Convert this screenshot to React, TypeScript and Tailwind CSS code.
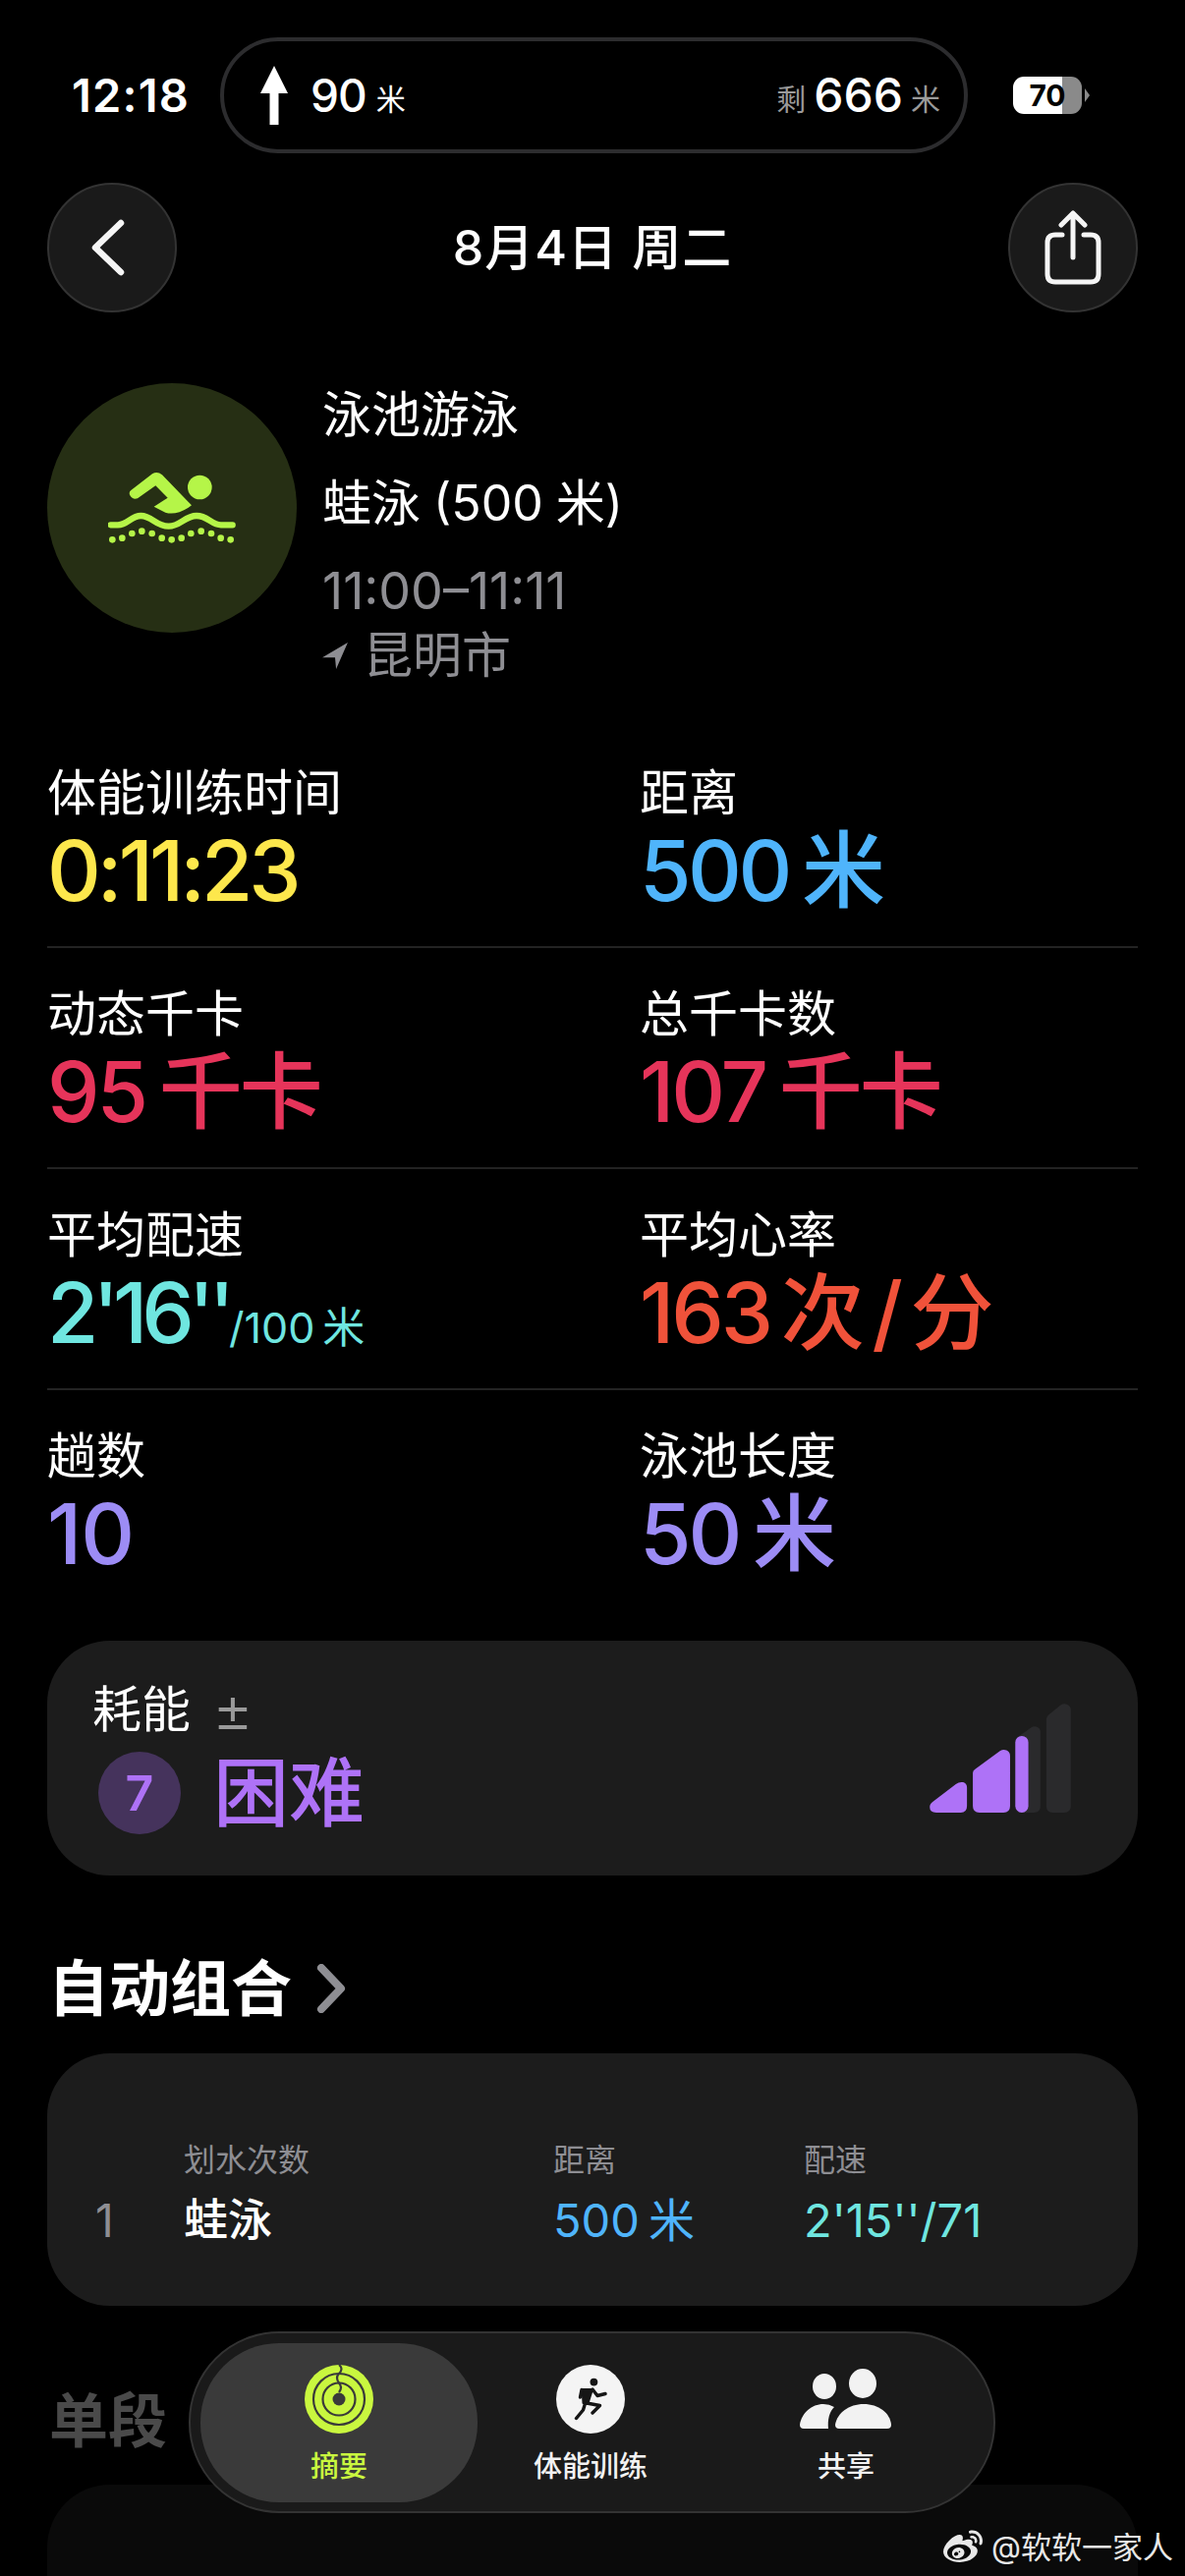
import React from "react";
import { FaWeibo } from "react-icons/fa6";

const metrics = [
  [
    { label: "体能训练时间", value: "0:11:23", color: "text-[#fde74c]", fit: "tracking-[-4px]" },
    { label: "距离", value: "500 米", color: "text-[#4fb4fb]", fit: "tracking-[-3.5px] [word-spacing:-6px]" },
  ],
  [
    { label: "动态千卡", value: "95 千卡", color: "text-[#e6345a]", fit: "tracking-[-3px] [word-spacing:-6px]" },
    { label: "总千卡数", value: "107 千卡", color: "text-[#e6345a]", fit: "tracking-[-3px] [word-spacing:-6px]" },
  ],
  [
    { label: "平均配速", value: "2'16''", unit: "/100 米", color: "text-[#6fe6e0]", fit: "tracking-[-6px]" },
    { label: "平均心率", value: "163 次 / 分", color: "text-[#f0523a]", fit: "tracking-[-3px] [word-spacing:-9px]" },
  ],
  [
    { label: "趟数", value: "10", color: "text-[#9c8cf5]", fit: "tracking-[-1px]" },
    { label: "泳池长度", value: "50 米", color: "text-[#9c8cf5]", fit: "tracking-[-3px] [word-spacing:-6px]" },
  ],
];

const tabs = [
  { label: "摘要", width: "w-[282px]", active: true },
  { label: "体能训练", width: "w-[230px]", active: false },
  { label: "共享", width: "w-[290px]", active: false },
];

const Swimmer = () => (
  <svg width="130" height="75" viewBox="30 55 390 225" fill="#b5f548">
    <path d="M100 112 L165 62 Q180 52 195 65 L285 158 L275 165 Q235 190 205 180 L170 162 L212 135 L175 98 L120 137 Q105 142 97 128 Q92 118 100 112 Z" />
    <circle cx="310" cy="103" r="37" />
    <path d="M38 218 H60 C90 218 100 190 130 190 C165 190 175 222 215 222 C250 222 265 190 300 190 C335 190 345 218 375 218 H410" fill="none" stroke="#b5f548" strokeWidth="19" strokeLinecap="round" />
    {[[43, 263], [73, 258], [103, 244], [133, 237], [164, 244], [194, 258], [224, 263], [254, 258], [283, 244], [314, 237], [345, 244], [374, 258], [404, 263]].map(([x, y]) => (
      <circle key={x} cx={x} cy={y} r="10" />
    ))}
  </svg>
);

const EffortBars = () => (
  <svg width="144" height="111" viewBox="75 38 432 334">
    <path d="M345 140 L385 112 Q395 105 405 110 Q414 115 414 125 V352 Q414 372 394 372 H345 Z" fill="#2a2a2c" />
    <path d="M432 85 Q432 78 440 72 L475 43 Q485 36 495 40 Q507 45 507 57 V352 Q507 372 487 372 H452 Q432 372 432 352 Z" fill="#2a2a2c" />
    <path d="M75 355 Q75 345 85 338 L155 285 Q165 277 177 279 Q189 283 189 295 V352 Q189 372 170 372 H95 Q75 372 75 355 Z" fill="#ae72f7" />
    <path d="M207 250 Q207 243 215 238 L290 183 Q300 177 310 181 Q321 186 321 198 V352 Q321 372 301 372 H227 Q207 372 207 352 Z" fill="#ae72f7" />
    <rect x="337" y="137" width="40" height="235" rx="20" fill="#ae72f7" />
  </svg>
);

const Rings = () => (
  <svg width="70" height="70" viewBox="0 0 70 70" fill="none">
    <circle cx="35" cy="35" r="35" fill="#c9f73f" />
    <circle cx="35" cy="35" r="26" stroke="#3a3a3a" strokeWidth="2.2" />
    <circle cx="35" cy="35" r="16.5" stroke="#3a3a3a" strokeWidth="2.2" />
    <circle cx="35" cy="35" r="6.5" fill="#3a3a3a" />
    <path d="M35 0 Q40 4 35 9 Q31 13 35 18.5 Q39 23 35 28" stroke="#3a3a3a" strokeWidth="2.2" />
  </svg>
);

const Runner = () => (
  <div className="flex size-[70px] items-center justify-center rounded-full bg-[#f4f4f4]">
    <svg width="34" height="44" viewBox="0 0 34 44" fill="none" stroke="#161616" strokeWidth="3.4" strokeLinecap="round" strokeLinejoin="round">
      <circle cx="20.4" cy="4.6" r="3.9" fill="#161616" stroke="none" />
      <path d="M8.6 12 H19 L14.5 26 H9.5 Z" fill="#161616" strokeWidth="2" />
      <path d="M8 12.5 L6.5 20 M19 12 L24 18.5 L32 16.5 M13 26 L26.5 28.5 L19 36 M11 28 L9.5 33 L2.5 41.5" />
    </svg>
  </div>
);

const People = () => (
  <svg width="94" height="62" viewBox="0 0 94 62" fill="#f2f2f2">
    <ellipse cx="25" cy="18" rx="12" ry="13" />
    <ellipse cx="64" cy="15" rx="14" ry="15" />
    <path d="M4 61 Q0 61 0 57 C2 45 12 36 24 36 Q30 36 35 39 C30 44 28 52 29 61 Z" />
    <path d="M40 61 Q36 61 36 57 C38 45 50 36 65 36 C80 36 92 45 93 57 Q93 61 89 61 Z" />
  </svg>
);

export default function App() {
  return (
    <div className="relative h-[2622px] w-[1206px] overflow-hidden bg-black font-['Inter','Noto_Sans_CJK_SC',sans-serif] text-white">
      {/* status bar */}
      <div className="flex h-[186px] items-start pt-[38px]">
        <div className="flex h-[118px] w-[224px] items-center pl-[73px] text-[47px] font-semibold tracking-[1.2px]">12:18</div>
        <div className="flex h-[118px] w-[761px] items-center justify-between rounded-[59px] border-[4px] border-[#2c2c2e] pl-[36px] pr-[24px]">
          <div className="flex items-center">
            <svg width="30" height="60" viewBox="0 0 30 60" fill="#fff">
              <path d="M15 0 L29 28 H19.5 V60 H10.5 V28 H1 Z" />
            </svg>
            <span className="ml-[22px] text-[46px] font-medium tracking-[-1px]">90</span>
            <span className="ml-[10px] mt-[8px] text-[30px]">米</span>
          </div>
          <div className="flex items-center gap-[8px]">
            <span className="mt-[8px] text-[30px] text-[#9a9a9a]">剩</span>
            <span className="text-[48px] font-medium">666</span>
            <span className="mt-[8px] text-[30px] text-[#9a9a9a]">米</span>
          </div>
        </div>
        <div className="flex h-[118px] items-center pl-[46px]">
          <div className="flex h-[38px] w-[70px] items-center justify-center rounded-[11px] bg-[linear-gradient(90deg,#fff_71%,#8a8a8a_71%)] text-[30px] font-bold leading-none text-black">70</div>
          <svg className="ml-[3px]" width="5" height="14" viewBox="0 0 5 14" fill="#8a8a8a">
            <path d="M0 0 L5 7 L0 14 Z" />
          </svg>
        </div>
      </div>

      {/* nav */}
      <div className="flex h-[132px] items-center justify-between px-[48px]">
        <div className="flex size-[132px] items-center justify-center rounded-full border-2 border-[#333] bg-[#1a1a1a]">
          <svg className="mr-[9px]" width="36" height="58" viewBox="0 0 36 58" fill="none" stroke="#f5f5f5" strokeWidth="6.5" strokeLinecap="round" strokeLinejoin="round">
            <path d="M31 4 L5 29 L31 54" />
          </svg>
        </div>
        <div className="text-[50px] font-medium tracking-[1px]">8月4日 周二</div>
        <div className="flex size-[132px] items-center justify-center rounded-full border-2 border-[#333] bg-[#1a1a1a]">
          <svg width="58" height="76" viewBox="0 0 58 76" fill="none" stroke="#f5f5f5" strokeWidth="5" strokeLinecap="round" strokeLinejoin="round">
            <path d="M18 25 H11 Q3 25 3 33 V65 Q3 73 11 73 H47 Q55 73 55 65 V33 Q55 25 47 25 H40" />
            <path d="M29 48 V3 M17 15 L29 3 L41 15" />
          </svg>
        </div>
      </div>

      {/* workout summary */}
      <div className="mt-[72px] flex px-[48px]">
        <div className="flex size-[254px] shrink-0 items-center justify-center rounded-full bg-[#262f14]">
          <Swimmer />
        </div>
        <div className="ml-[26px] flex flex-col">
          <div className="flex h-[64px] items-center text-[50px]">泳池游泳</div>
          <div className="mt-[26px] flex h-[64px] items-center text-[50px] [word-spacing:-1px]">蛙泳 (500 米)</div>
          <div className="mt-[27px] flex h-[62px] items-center text-[52px] text-[#8e8e93]">11:00–11:11</div>
          <div className="mt-[3px] flex h-[62px] items-center gap-[16px] text-[50px] text-[#8e8e93]">
            <svg width="26" height="28" viewBox="0 0 24 26" fill="#8e8e93">
              <path d="M24 1 L0 15 L12 15 L13 26 Z" />
            </svg>
            昆明市
          </div>
        </div>
      </div>

      {/* metrics */}
      <div className="mt-[42px] px-[48px]">
        {metrics.map((row, i) => (
          <div key={i} className={`grid h-[225px] grid-cols-[603px_1fr] pt-[35px] ${i < 3 ? "border-b-2 border-[#232323]" : ""}`}>
            {row.map((m) => (
              <div key={m.label}>
                <div className="flex h-[64px] items-center text-[50px]">{m.label}</div>
                <div className={`flex h-[96px] items-baseline whitespace-pre text-[85px] font-medium leading-[96px] ${m.fit} ${m.color}`}>
                  {m.value}
                  {m.unit && <span className="text-[43px] font-normal tracking-normal [word-spacing:-4px]">{m.unit}</span>}
                </div>
              </div>
            ))}
          </div>
        ))}
      </div>

      {/* effort */}
      <div className="mx-[48px] mt-[30px] flex h-[239px] justify-between rounded-[64px] bg-[#1c1c1c] pl-[46px] pr-[68px]">
        <div className="flex flex-col pt-[38px]">
          <div className="flex h-[64px] items-center gap-[22px] text-[50px]">
            耗能
            <span className="text-[64px] font-light leading-none text-[#9a9a9a]">±</span>
          </div>
          <div className="mt-[8px] flex items-center gap-[33px] pl-[6px]">
            <div className="flex size-[84px] items-center justify-center rounded-full bg-[#45335c] text-[50px] font-semibold text-[#ae72f7]">7</div>
            <span className="text-[77px] font-medium leading-[90px] text-[#ae72f7]">困难</span>
          </div>
        </div>
        <div className="pt-[64px]">
          <EffortBars />
        </div>
      </div>

      {/* auto sets */}
      <div className="ml-[49px] mt-[72px] flex h-[86px] items-center gap-[25px] text-[62px] font-bold">
        自动组合
        <svg width="30" height="50" viewBox="0 0 30 50" fill="none" stroke="#8e8e93" strokeWidth="8" strokeLinecap="round" strokeLinejoin="round">
          <path d="M5 4 L25 25 L5 46" />
        </svg>
      </div>
      <div className="mx-[48px] mt-[23px] h-[257px] rounded-[64px] bg-[#1c1c1c] pl-[49px] pt-[88px]">
        <div className="grid grid-cols-[90px_376px_255px_1fr] items-center">
          <div />
          <div className="h-[42px] text-[32px] leading-[42px] text-[#8e8e93]">划水次数</div>
          <div className="h-[42px] text-[32px] leading-[42px] text-[#8e8e93]">距离</div>
          <div className="h-[42px] text-[32px] leading-[42px] text-[#8e8e93]">配速</div>
          <div className="mt-[10px] h-[60px] text-[46px] leading-[60px] text-[#8e8e93]">1</div>
          <div className="mt-[10px] h-[60px] text-[45px] font-medium leading-[60px]">蛙泳</div>
          <div className="mt-[10px] h-[60px] text-[47px] leading-[60px] text-[#4fb4fb] [word-spacing:-4px]">500 米</div>
          <div className="mt-[10px] h-[60px] text-[47px] leading-[60px] text-[#6fe6e0]">2'15''/71</div>
        </div>
      </div>

      {/* splits, mostly under the tab bar */}
      <div className="ml-[50px] mt-[74px] flex h-[85px] items-center text-[60px] font-bold text-[#4a4a4a]">单段</div>
      <div className="mx-[48px] mt-[23px] h-[300px] rounded-[64px] bg-[#0a0a0a]" />

      {/* tab bar */}
      <div className="absolute left-[192px] top-[2373px] flex h-[185px] w-[821px] items-center rounded-[92px] border-2 border-[#333] bg-[#1a1a1a] pl-[10px]">
        {tabs.map((t) => (
          <div key={t.label} className={`flex h-[162px] flex-col items-center rounded-[80px] pt-[22px] ${t.width} ${t.active ? "bg-[#3a3a3a] text-[#c9f73f]" : "text-[#f2f2f2]"}`}>
            <div className="flex h-[70px] items-center">
              {t.label === "摘要" && <Rings />}
              {t.label === "体能训练" && <Runner />}
              {t.label === "共享" && <People />}
            </div>
            <div className="mt-[16px] text-[29px] font-medium leading-[36px]">{t.label}</div>
          </div>
        ))}
      </div>

      {/* watermark */}
      <div className="absolute left-[960px] top-[2571px] flex items-center gap-[9px] text-[31px] leading-[44px] text-[#e8e8e8]">
        <FaWeibo size={40} />
        <span>@软软一家人</span>
      </div>
    </div>
  );
}
